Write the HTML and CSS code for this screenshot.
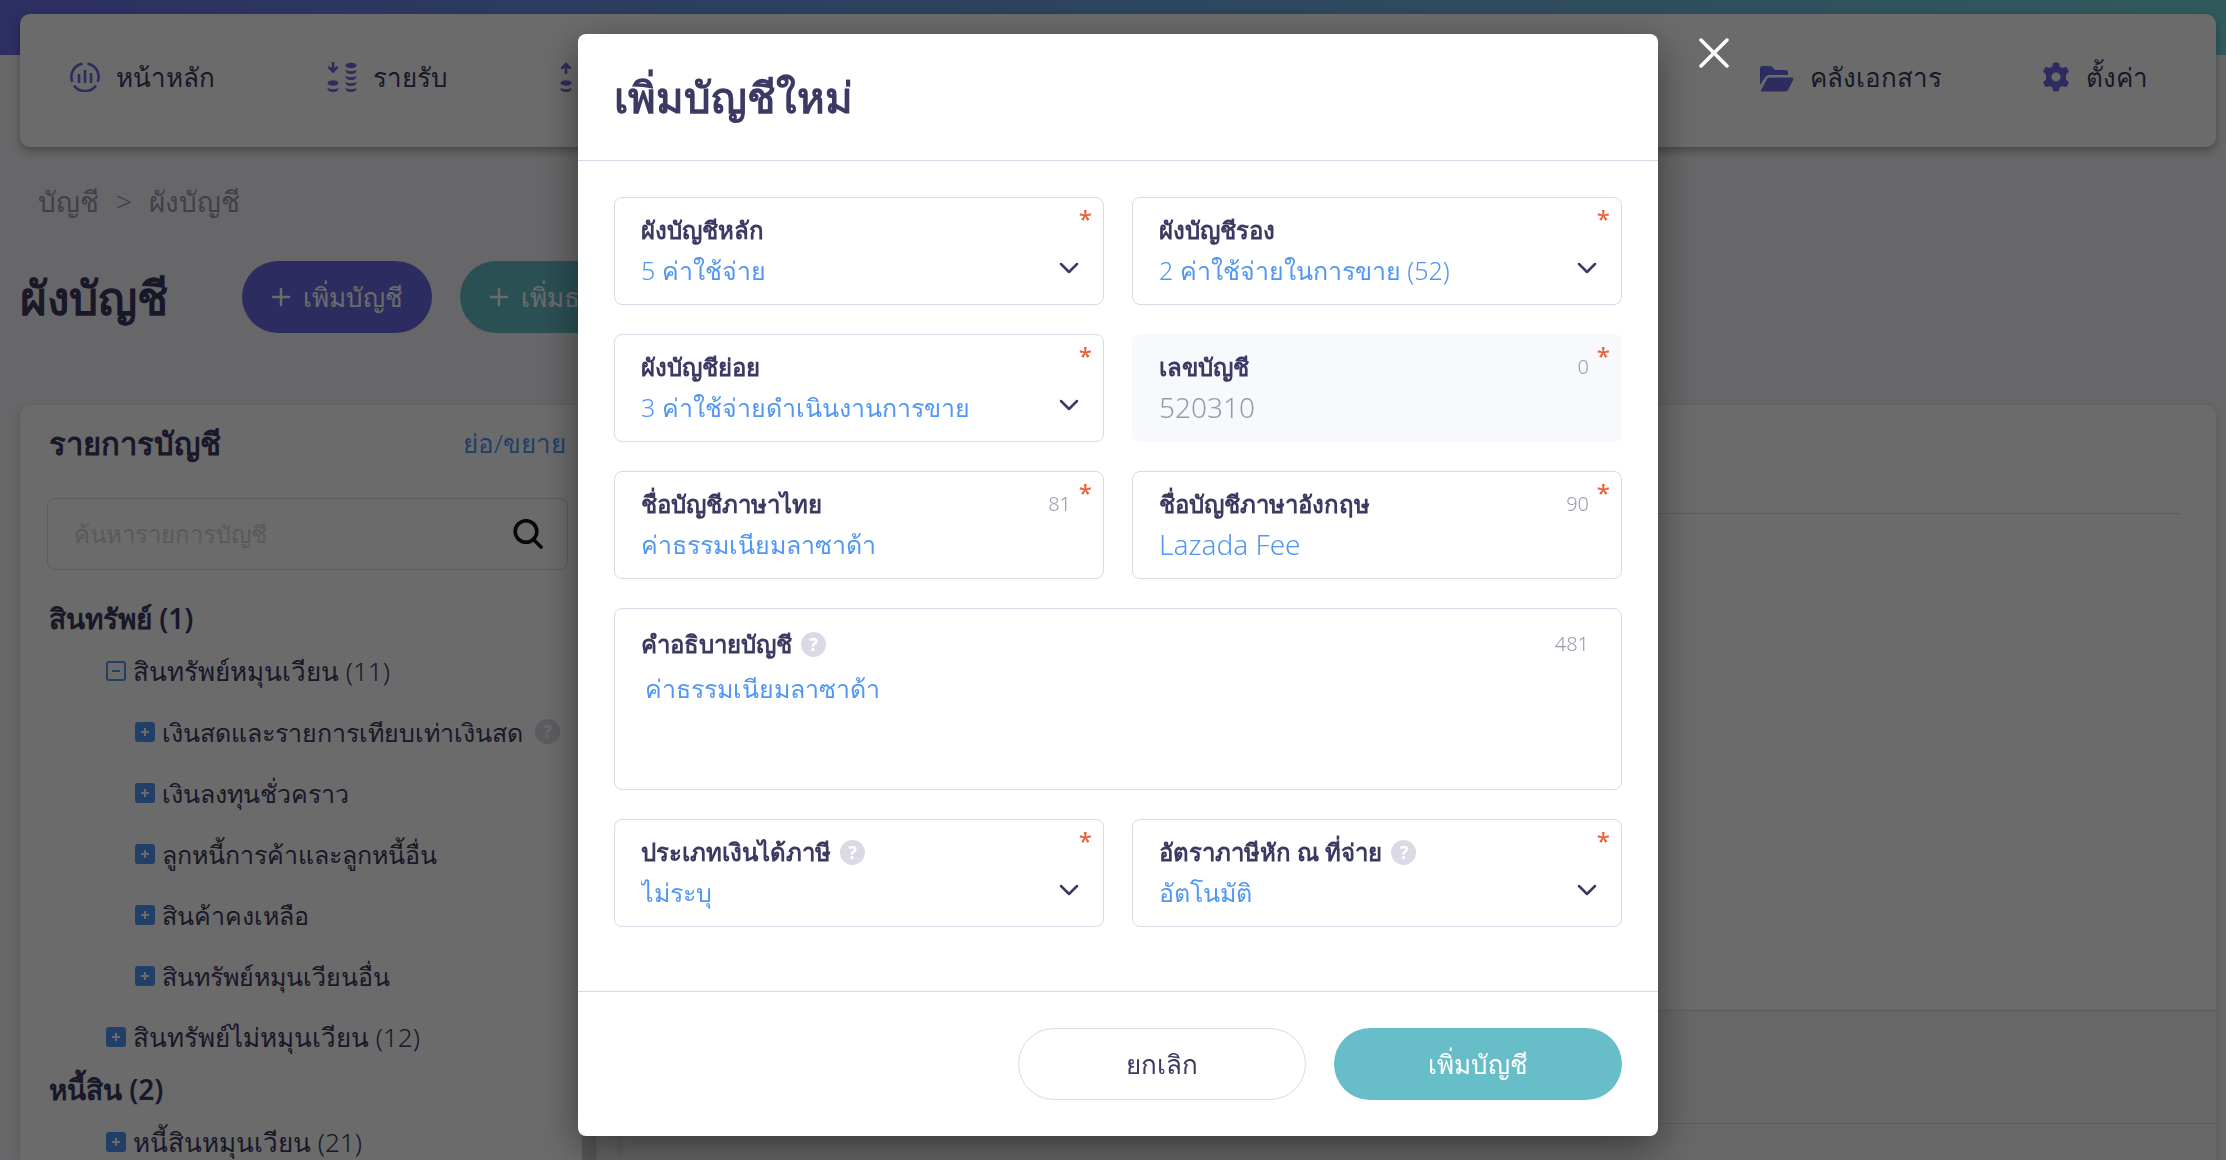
FILE: index.html
```html
<!DOCTYPE html>
<html lang="th">
<head>
  <meta charset="UTF-8">
  <meta name="viewport" content="width=device-width, initial-scale=1">
  <title>ผังบัญชี</title>
  <link rel="stylesheet" href="styles.css">
</head>
<body>
  <!-- icons used more than once -->
  <svg class="sprite" aria-hidden="true">
    <symbol id="plus-box" viewBox="0 0 20 20">
      <rect width="20" height="20" rx="3" fill="#5097f5"/>
      <path d="M10 6v8M6 10h8" stroke="#fff" stroke-width="2"/>
    </symbol>
    <symbol id="minus-box" viewBox="0 0 20 20">
      <rect x="1" y="1" width="18" height="18" rx="2" fill="none" stroke="#5097f5" stroke-width="2"/>
      <path d="M6 10h8" stroke="#5097f5" stroke-width="2"/>
    </symbol>
    <symbol id="plus" viewBox="0 0 20 20">
      <path d="M10 2v16M2 10h16" stroke="currentColor" stroke-width="2.5" stroke-linecap="round"/>
    </symbol>
    <symbol id="chevron" viewBox="0 0 20 12">
      <path d="M2 2l8 8 8-8" fill="none" stroke="currentColor" stroke-width="2.5" stroke-linecap="round" stroke-linejoin="round"/>
    </symbol>
  </svg>

  <div class="page">
    <nav class="navbar">
      <a class="nav-item" href="#">
        <svg class="nav-icon" viewBox="0 0 30 30" fill="none" stroke="currentColor" stroke-width="2.6">
          <path d="M12.500 1.600A13.500 13.500 0 0 0 2.400 20M17.500 1.600A13.500 13.500 0 0 1 27.600 20M4 23.500A13.500 13.500 0 0 0 26 23.500"/>
          <path d="M9 12v9M15 8v13M21 11v10"/>
        </svg>
        หน้าหลัก
      </a>
      <a class="nav-item" href="#">
        <svg class="nav-icon" viewBox="0 0 30 30" fill="currentColor">
          <path d="M4.700 0h2.600v6l2.700-2 1.500 1.500L6 11.500.5 5.500 2 4l2.700 2z"/>
          <ellipse cx="6" cy="21" rx="5.500" ry="2.800"/><ellipse cx="24" cy="3.500" rx="5.500" ry="2.800"/>
          <path d="M.5 26q5.500 2.500 11 0q0 4-5.500 4T.5 26zM18.500 8q5.500 2.500 11 0q0 4-5.500 4t-5.500-4zM18.500 14q5.500 2.500 11 0q0 4-5.500 4t-5.500-4zM18.500 20q5.500 2.500 11 0q0 4-5.500 4t-5.500-4zM18.500 26q5.500 2.500 11 0q0 4-5.500 4t-5.500-4z"/>
        </svg>
        รายรับ
      </a>
      <a class="nav-item" href="#" aria-label="รายจ่าย">
        <svg class="nav-icon" viewBox="0 0 30 30" fill="currentColor">
          <path d="M4.700 12h2.600V5.500l2.700 2L11.500 6 6 0 .5 6 2 7.500l2.700-2z"/>
          <ellipse cx="6" cy="21" rx="5.500" ry="2.800"/><ellipse cx="24" cy="3.500" rx="5.500" ry="2.800"/>
          <path d="M.5 26q5.500 2.500 11 0q0 4-5.500 4T.5 26zM18.500 8q5.500 2.500 11 0q0 4-5.500 4t-5.500-4zM18.500 14q5.500 2.500 11 0q0 4-5.500 4t-5.500-4zM18.500 20q5.500 2.500 11 0q0 4-5.500 4t-5.500-4zM18.500 26q5.500 2.500 11 0q0 4-5.500 4t-5.500-4z"/>
        </svg>
      </a>
      <div class="nav-right">
        <a class="nav-item" href="#">
          <svg class="nav-icon folder" viewBox="0 0 34 30" fill="currentColor">
            <path d="M0 23V6.500A2.500 2.500 0 0 1 2.500 4H11l4 4h10.500A2.500 2.500 0 0 1 28 10.500V13H9a4.500 4.500 0 0 0-4 2.500z"/>
            <path d="M1 28.500 7 17a3 3 0 0 1 2.600-1.500H32a1.500 1.500 0 0 1 1.300 2.200L28 28a3 3 0 0 1-2.600 1.500H1.600a.7.7 0 0 1-.6-1z"/>
          </svg>
          คลังเอกสาร
        </a>
        <a class="nav-item" href="#">
          <svg class="nav-icon gear" viewBox="0 0 28 30">
            <path fill="currentColor" fill-rule="evenodd" d="M11 1.500Q11.200.5 12.200.5h3.600q1 0 1.200 1l.6 3 2.700 1.600 3-1q1-.3 1.500.5l1.800 3.100q.5.900-.3 1.600L24 12.400v5.200l2.300 2.100q.8.700.3 1.600l-1.800 3.100q-.5.800-1.500.5l-3-1-2.700 1.600-.6 3q-.2 1-1.200 1h-3.600q-1 0-1.200-1l-.6-3-2.700-1.600-3 1q-1 .3-1.500-.5l-1.800-3.100q-.5-.9.300-1.600L4 17.600v-5.200l-2.300-2.100q-.8-.7-.3-1.600l1.800-3.100q.5-.8 1.500-.5l3 1 2.700-1.600zM14 10.500a4.500 4.500 0 1 0 0 9 4.500 4.500 0 0 0 0-9z"/>
          </svg>
          ตั้งค่า
        </a>
      </div>
    </nav>

    <div class="breadcrumb">
      <a href="#">บัญชี</a>
      <span>&gt;</span>
      <a href="#">ผังบัญชี</a>
    </div>

    <div class="page-head">
      <h1>ผังบัญชี</h1>
      <button class="btn btn-purple"><svg class="btn-icon"><use href="#plus"/></svg>เพิ่มบัญชี</button>
      <button class="btn btn-teal"><svg class="btn-icon"><use href="#plus"/></svg>เพิ่มธนาคาร</button>
    </div>

    <div class="panels">
      <aside class="sidebar">
        <div class="sidebar-head">
          <h2>รายการบัญชี</h2>
          <a href="#">ย่อ/ขยาย</a>
        </div>
        <div class="search">
          <input type="text" placeholder="ค้นหารายการบัญชี" aria-label="ค้นหารายการบัญชี">
          <svg viewBox="0 0 30 30" fill="none" stroke="#111" stroke-width="3.6" stroke-linecap="round">
            <circle cx="13" cy="12.500" r="10.800"/><path d="M20.500 20.500l7.500 7.500"/>
          </svg>
        </div>
        <ul class="tree">
          <li class="group">สินทรัพย์ (1)</li>
          <li class="level-1"><svg><use href="#minus-box"/></svg>สินทรัพย์หมุนเวียน (11)</li>
          <li class="level-2"><svg><use href="#plus-box"/></svg>เงินสดและรายการเทียบเท่าเงินสด <span class="help">?</span></li>
          <li class="level-2"><svg><use href="#plus-box"/></svg>เงินลงทุนชั่วคราว</li>
          <li class="level-2"><svg><use href="#plus-box"/></svg>ลูกหนี้การค้าและลูกหนี้อื่น</li>
          <li class="level-2"><svg><use href="#plus-box"/></svg>สินค้าคงเหลือ</li>
          <li class="level-2"><svg><use href="#plus-box"/></svg>สินทรัพย์หมุนเวียนอื่น</li>
          <li class="level-1"><svg><use href="#plus-box"/></svg>สินทรัพย์ไม่หมุนเวียน (12)</li>
          <li class="group">หนี้สิน (2)</li>
          <li class="level-1"><svg><use href="#plus-box"/></svg>หนี้สินหมุนเวียน (21)</li>
        </ul>
      </aside>
      <main class="content">
        <div class="content-head"></div>
        <div class="content-body"></div>
        <div class="content-row"></div>
        <div class="content-row"></div>
      </main>
    </div>
  </div>

  <!-- add account modal -->
  <div class="overlay">
    <div class="modal" role="dialog" aria-labelledby="modalTitle">
      <button class="close" aria-label="ปิด">
        <svg viewBox="0 0 30 30"><path d="M2 2l26 26M28 2L2 28" stroke="#fff" stroke-width="3.5" stroke-linecap="round"/></svg>
      </button>
      <div class="modal-header">
        <h2 id="modalTitle">เพิ่มบัญชีใหม่</h2>
      </div>
      <form class="modal-body">
        <div class="field">
          <div class="field-top"><label for="mainChart">ผังบัญชีหลัก</label></div>
          <select id="mainChart"><option>5 ค่าใช้จ่าย</option></select>
          <svg class="chevron"><use href="#chevron"/></svg>
          <span class="required">*</span>
        </div>
        <div class="field">
          <div class="field-top"><label for="secondChart">ผังบัญชีรอง</label></div>
          <select id="secondChart"><option>2 ค่าใช้จ่ายในการขาย (52)</option></select>
          <svg class="chevron"><use href="#chevron"/></svg>
          <span class="required">*</span>
        </div>
        <div class="field">
          <div class="field-top"><label for="subChart">ผังบัญชีย่อย</label></div>
          <select id="subChart"><option>3 ค่าใช้จ่ายดำเนินงานการขาย</option></select>
          <svg class="chevron"><use href="#chevron"/></svg>
          <span class="required">*</span>
        </div>
        <div class="field field-disabled">
          <div class="field-top"><label for="accountNo">เลขบัญชี</label><span class="count">0</span></div>
          <input class="latin" type="text" id="accountNo" value="520310" disabled>
          <span class="required">*</span>
        </div>
        <div class="field">
          <div class="field-top"><label for="nameTh">ชื่อบัญชีภาษาไทย</label><span class="count">81</span></div>
          <input type="text" id="nameTh" value="ค่าธรรมเนียมลาซาด้า">
          <span class="required">*</span>
        </div>
        <div class="field">
          <div class="field-top"><label for="nameEn">ชื่อบัญชีภาษาอังกฤษ</label><span class="count">90</span></div>
          <input class="latin" type="text" id="nameEn" value="Lazada Fee">
          <span class="required">*</span>
        </div>
        <div class="field field-wide">
          <div class="field-top"><label for="detail">คำอธิบายบัญชี</label><span class="help">?</span><span class="count">481</span></div>
          <textarea id="detail">ค่าธรรมเนียมลาซาด้า</textarea>
        </div>
        <div class="field">
          <div class="field-top"><label for="incomeType">ประเภทเงินได้ภาษี</label><span class="help">?</span></div>
          <select id="incomeType"><option>ไม่ระบุ</option></select>
          <svg class="chevron"><use href="#chevron"/></svg>
          <span class="required">*</span>
        </div>
        <div class="field">
          <div class="field-top"><label for="taxRate">อัตราภาษีหัก ณ ที่จ่าย</label><span class="help">?</span></div>
          <select id="taxRate"><option>อัตโนมัติ</option></select>
          <svg class="chevron"><use href="#chevron"/></svg>
          <span class="required">*</span>
        </div>
      </form>
      <div class="modal-footer">
        <button class="btn btn-outline">ยกเลิก</button>
        <button class="btn btn-teal">เพิ่มบัญชี</button>
      </div>
    </div>
  </div>
</body>
</html>
```

FILE: styles.css
```css
* {
  box-sizing: border-box;
}

body {
  margin: 0;
  overflow: hidden;
  font-family: "Noto Sans", sans-serif;
  font-size: 26px;
  font-weight: 300;
  line-height: 40px;
  color: #3b3a63;
  background-color: #f5f5f9;
}

h1, h2, ul {
  margin: 0;
  padding: 0;
}

a {
  color: inherit;
  text-decoration: none;
}

button, input, select, textarea {
  font: inherit;
  color: inherit;
}

.sprite {
  display: none;
}

/* page */
.page {
  display: flex;
  flex-direction: column;
  height: 100vh;
  padding: 14px 10px 0 20px;
  background: linear-gradient(90deg, #6c6fe8, #6a92e5 27%, #6fb8e0 72%, #72d6dc) no-repeat top / 100% 55px;
}

.navbar {
  display: flex;
  gap: 112px;
  height: 133px;
  padding: 43px 68px 0 50px;
  background-color: #fff;
  border-radius: 10px;
  box-shadow: 0 4px 10px rgba(0, 0, 0, 0.3);
}

.nav-item {
  display: flex;
  gap: 16px;
  height: 40px;
  align-items: center;
  white-space: nowrap;
}

.nav-icon {
  width: 30px;
  height: 30px;
  color: #6c6ae4;
}

.nav-icon.folder {
  width: 34px;
}

.nav-icon.gear {
  width: 28px;
}

.nav-right {
  display: flex;
  gap: 100px;
  margin-left: auto;
}

.breadcrumb {
  display: flex;
  gap: 17px;
  padding: 34px 18px 0;
  font-size: 28px;
  color: #9b9aac;
}

.page-head {
  display: flex;
  align-items: center;
  gap: 28px;
  padding: 40px 0 72px;
}

.page-head h1 {
  margin-right: 46px;
  font-size: 46px;
  line-height: 60px;
  font-weight: 600;
}

/* buttons */
.btn {
  display: flex;
  align-items: center;
  justify-content: center;
  gap: 12px;
  height: 72px;
  padding: 0 29px;
  border: none;
  border-radius: 36px;
  color: #fff;
  white-space: nowrap;
  cursor: pointer;
}

.btn-icon {
  width: 20px;
  height: 20px;
}

.btn-purple {
  background-color: #6c6ae4;
}

.btn-teal {
  background-color: #67bec9;
}

.btn-outline {
  color: #3b3a63;
  background-color: #fff;
  border: 1px solid #dadae6;
}

/* panels */
.panels {
  display: flex;
  flex: 1;
  gap: 26px;
  min-height: 0;
}

.sidebar {
  width: 576px;
  padding: 18px 14px 0 27px;
  border-right: 14px solid #cfcfcf;
  background-color: #fff;
  border-radius: 10px 0 0 0;
  box-shadow: 0 2px 8px rgba(0, 0, 0, 0.15);
}

.sidebar-head {
  display: flex;
  justify-content: space-between;
  padding: 0 2px;
}

.sidebar-head h2 {
  font-size: 31px;
  font-weight: 600;
}

.sidebar-head a {
  color: #5097f5;
}

.search {
  display: flex;
  align-items: center;
  height: 72px;
  margin: 35px 0 26px;
  padding: 0 24px 0 26px;
  border: 1px solid #dadae6;
  border-radius: 8px;
}

.search input {
  flex: 1;
  min-width: 0;
  padding: 0;
  border: none;
  outline: none;
  background: none;
  font-size: 24px;
}

.search input::placeholder {
  color: #d5d5de;
}

.search svg {
  width: 30px;
  height: 30px;
}

.tree {
  list-style: none;
  white-space: nowrap;
}

.tree li {
  display: flex;
  align-items: center;
  height: 61px;
  gap: 7px;
}

.tree svg {
  flex: none;
  width: 20px;
  height: 20px;
}

.tree .group {
  height: 44px;
  padding-left: 2px;
  font-size: 28px;
  font-weight: 600;
}

.tree .level-1 {
  padding-left: 59px;
}

.tree .level-2 {
  padding-left: 88px;
  font-size: 25px;
}

.help {
  flex: none;
  width: 25px;
  height: 25px;
  margin-left: 5px;
  border-radius: 50%;
  background-color: #dadae6;
  color: #fff;
  font-size: 18px;
  font-weight: 700;
  line-height: 25px;
  text-align: center;
}

.content {
  display: flex;
  flex-direction: column;
  flex: 1;
  background-color: #fff;
  border-radius: 10px 10px 0 0;
  box-shadow: 0 2px 8px rgba(0, 0, 0, 0.15);
}

.content-head {
  height: 109px;
  margin: 0 36px;
  border-bottom: 1px solid #dcdce4;
}

.content-body {
  flex: 1;
}

.content-row {
  height: 37px;
  border-top: 1px solid #dcdce4;
  background-color: #f5f5f5;
}

.content-body + .content-row {
  height: 113px;
}

/* modal */
.overlay {
  position: fixed;
  inset: 0;
  display: flex;
  align-items: flex-start;
  justify-content: center;
  padding: 34px 0 24px 10px;
  background-color: rgba(0, 0, 0, 0.58);
}

.modal {
  position: relative;
  width: 1080px;
  background-color: #fff;
  border-radius: 8px;
  box-shadow: 0 12px 40px rgba(0, 0, 0, 0.45);
}

.close {
  position: absolute;
  top: 4px;
  left: calc(100% + 41px);
  width: 30px;
  height: 30px;
  padding: 0;
  border: none;
  background: none;
  cursor: pointer;
}

.close svg {
  display: block;
}

.modal-header {
  padding: 32px 36px;
  border-bottom: 1px solid #dadae6;
}

.modal-header h2 {
  font-size: 42px;
  line-height: 62px;
  font-weight: 600;
}

.modal-body {
  display: grid;
  grid-template-columns: 1fr 1fr;
  gap: 29px 28px;
  padding: 36px 36px 64px;
}

.field {
  position: relative;
  height: 108px;
  padding: 12px 26px 0;
  border: 1px solid #dadae6;
  border-radius: 8px;
}

.field-top {
  display: flex;
  align-items: center;
  gap: 4px;
}

.field label {
  font-size: 24px;
  font-weight: 600;
}

.field input,
.field select,
.field textarea {
  display: block;
  width: 100%;
  height: 40px;
  padding: 0;
  border: none;
  outline: none;
  background: none;
  font-size: 25px;
  color: #5097f5;
  appearance: none;
  resize: none;
}

.field .latin {
  font-size: 28px;
}

.field .count {
  margin: 0 6px 0 auto;
  font-size: 20px;
  color: #9b9aac;
}

.field-disabled {
  background-color: #f8f9fd;
  border-color: #f8f9fd;
}

.field-disabled input {
  color: #9b9aac;
}

.field-wide {
  grid-column: span 2;
  height: 182px;
  padding-top: 15px;
}

.field-wide textarea {
  height: 100px;
  padding: 4px;
}

.chevron {
  position: absolute;
  right: 24px;
  bottom: 30px;
  width: 20px;
  height: 12px;
  pointer-events: none;
}

.required {
  position: absolute;
  top: 1px;
  right: 11px;
  font-size: 24px;
  font-weight: 500;
  color: #e8603c;
}

.modal-footer {
  display: flex;
  justify-content: flex-end;
  gap: 28px;
  padding: 36px;
  border-top: 1px solid #dadae6;
}

.modal-footer .btn {
  width: 288px;
}
```
